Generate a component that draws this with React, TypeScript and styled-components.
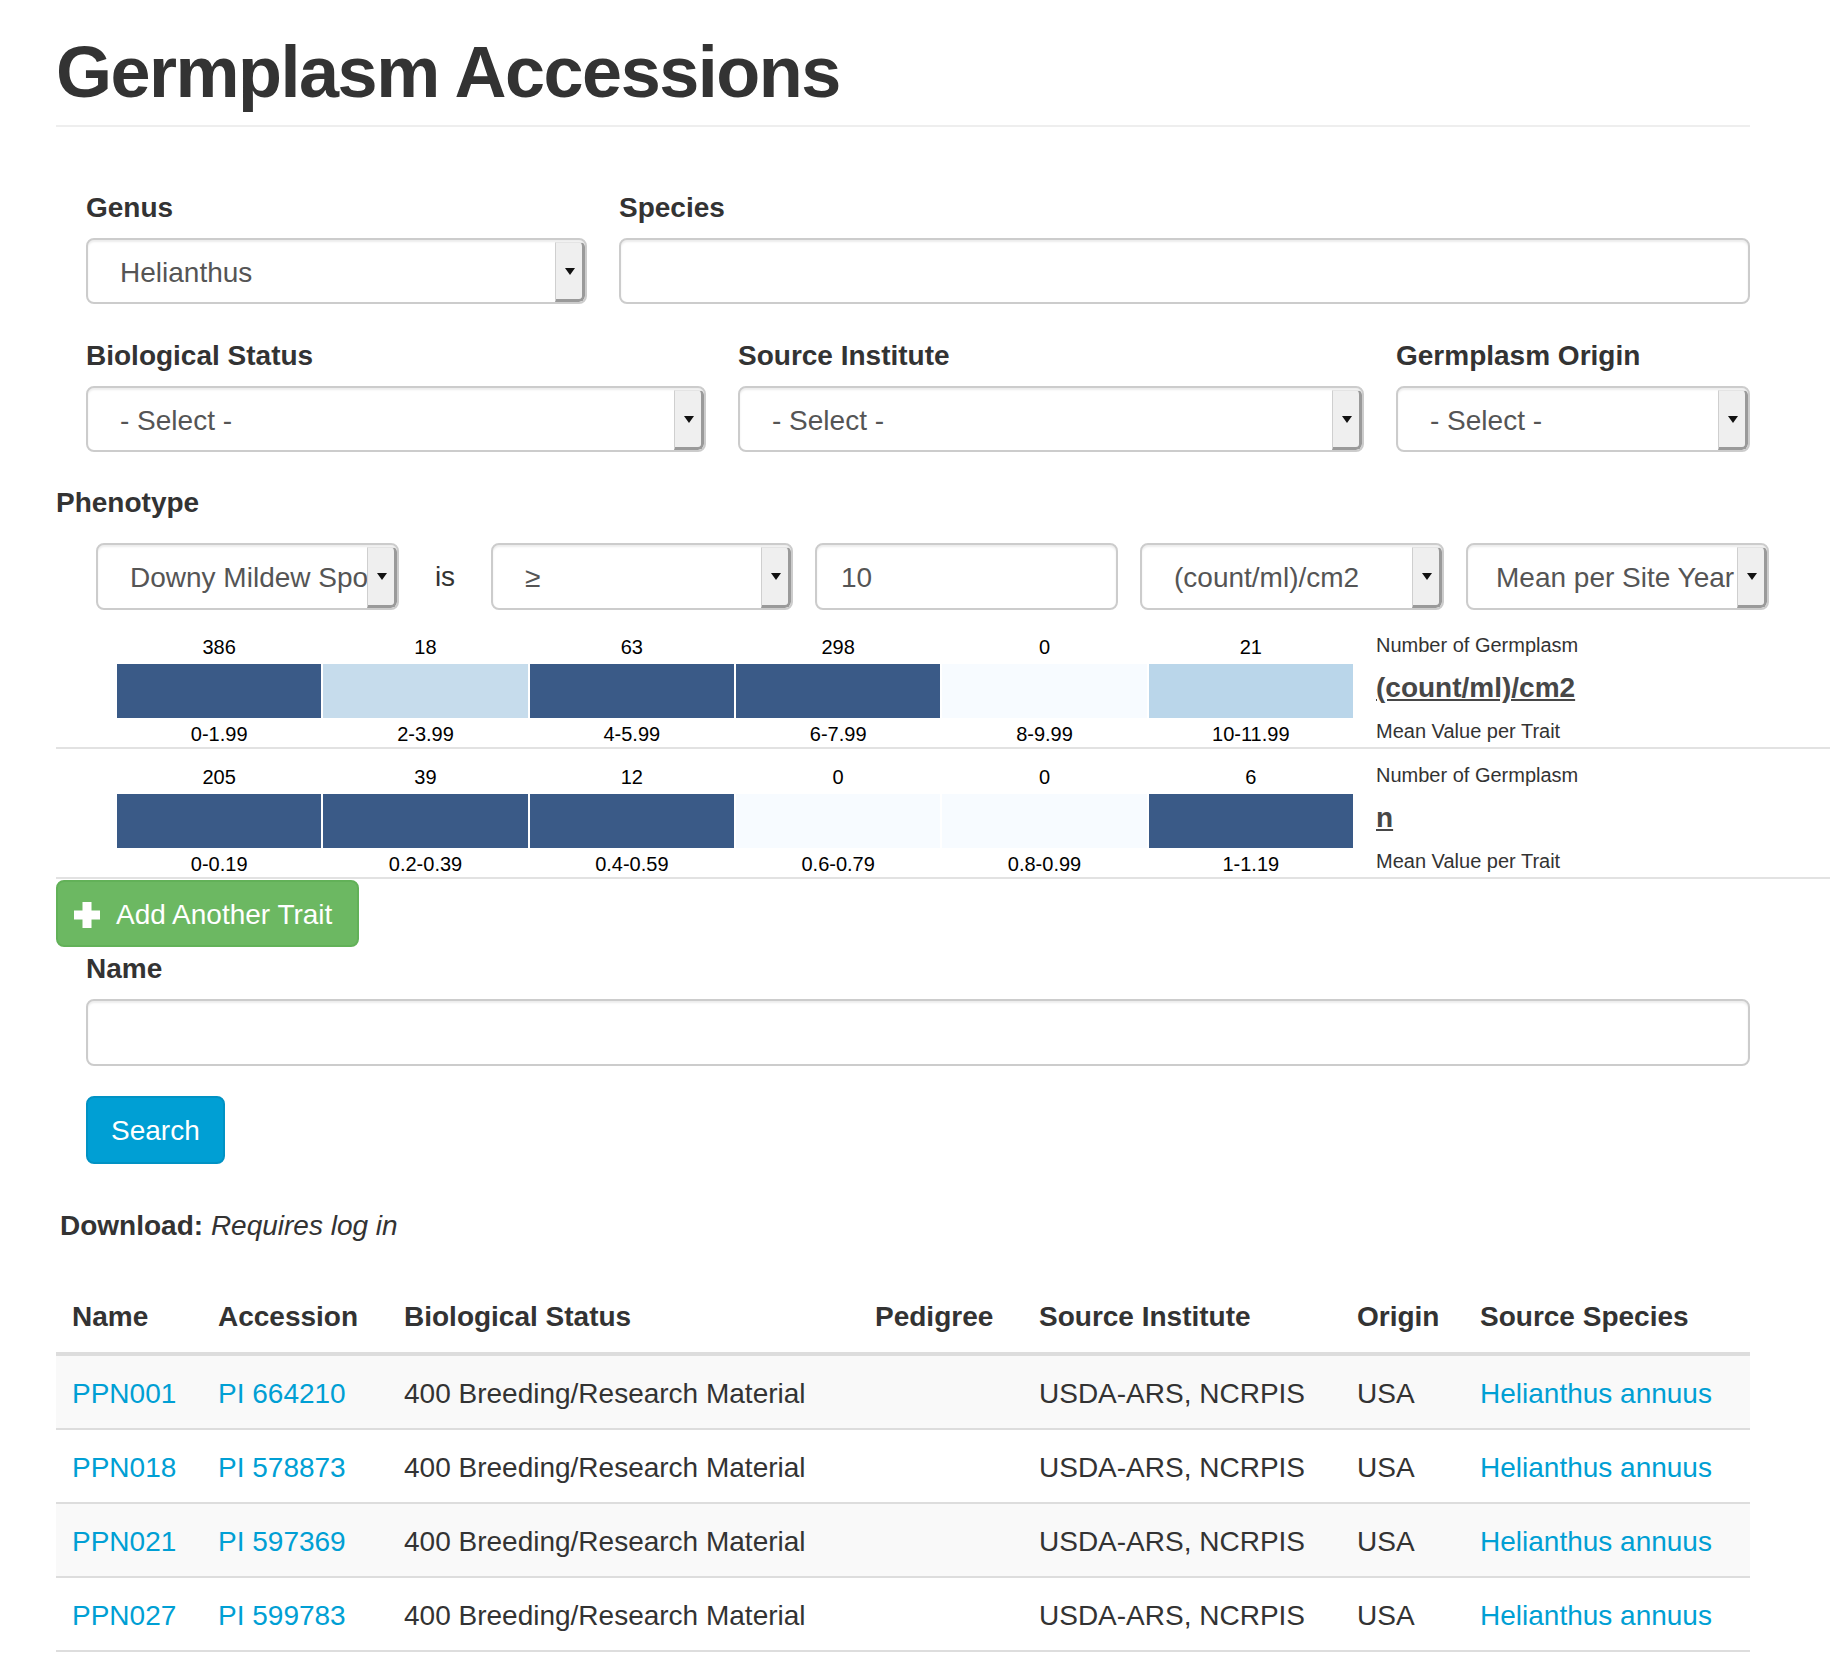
import React from 'react';
import styled, { createGlobalStyle } from 'styled-components';

const GlobalStyle = createGlobalStyle`
  html, body { margin: 0; padding: 0; background: #fff; }
  body {
    font-family: "Liberation Sans", Arial, Helvetica, sans-serif;
    color: #333;
    font-size: 28px;
    line-height: 40px;
    overflow-x: hidden;
  }
  * { box-sizing: border-box; }
`;

const Page = styled.div`
  width: 1750px;
  padding-left: 56px;
`;

const Title = styled.h1`
  margin: 32px 0 0;
  padding-bottom: 13px;
  border-bottom: 2px solid #eee;
  font-size: 72px;
  line-height: 80px;
  font-weight: 700;
  letter-spacing: -1.5px;
  color: #333;
`;

const Fields = styled.div`
  margin-top: 61px;
  padding-left: 30px;
  display: flex;
  flex-direction: column;
  gap: 32px;
`;

const Row = styled.div`
  display: flex;
  gap: 32px;
`;

const Field = styled.div<{ $w: number }>`
  width: ${(p) => p.$w}px;
  display: flex;
  flex-direction: column;
`;

const Label = styled.label<{ $top?: number }>`
  display: block;
  margin-top: ${(p) => p.$top ?? 0}px;
  margin-bottom: 10px;
  font-size: 28px;
  line-height: 40px;
  font-weight: 700;
  color: #333;
`;

const SelectBox = styled.div<{ $w?: number; $h?: number }>`
  display: flex;
  align-items: stretch;
  width: ${(p) => (p.$w ? `${p.$w}px` : '100%')};
  flex: 0 0 auto;
  height: ${(p) => p.$h ?? 66}px;
  border: 2px solid #ccc;
  border-radius: 8px;
  background: #fff;
  box-shadow: inset 0 2px 2px rgba(0, 0, 0, 0.075);
  overflow: hidden;
`;

const SelectValue = styled.div<{ $pad?: number }>`
  flex: 1;
  min-width: 0;
  padding-left: ${(p) => p.$pad ?? 32}px;
  padding-top: 3px;
  display: flex;
  align-items: center;
  white-space: nowrap;
  overflow: hidden;
  font-size: 28px;
  line-height: 40px;
  color: #555;
`;

const ArrowButton = styled.div`
  flex: 0 0 30px;
  margin-top: 2px;
  background: #efefef;
  border-top: 1px solid #e4e4e4;
  border-left: 1px solid #cfcfcf;
  border-right: 3px solid #9a9a9a;
  border-bottom: 3px solid #9a9a9a;
  border-radius: 0 5px 6px 0;
  display: flex;
  align-items: center;
  justify-content: center;
`;

const Caret = styled.span`
  width: 0;
  height: 0;
  margin-left: 1px;
  border-left: 5px solid transparent;
  border-right: 5px solid transparent;
  border-top: 7px solid #111;
`;

const TextInput = styled.input<{ $w?: number; $h?: number }>`
  display: block;
  width: ${(p) => (p.$w ? `${p.$w}px` : '100%')};
  flex: 0 0 auto;
  height: ${(p) => p.$h ?? 66}px;
  margin: 0;
  padding: 3px 24px 0;
  border: 2px solid #ccc;
  border-radius: 8px;
  background: #fff;
  box-shadow: inset 0 2px 2px rgba(0, 0, 0, 0.075);
  font-family: "Liberation Sans", Arial, Helvetica, sans-serif;
  font-size: 28px;
  color: #555;
  outline: none;
`;

const SectionLabel = styled.div`
  margin-top: 31px;
  margin-bottom: 20px;
  font-size: 28px;
  line-height: 40px;
  font-weight: 700;
  color: #333;
`;

const PhenoRow = styled.div`
  display: flex;
  align-items: center;
  gap: 22px;
  padding-left: 40px;
  height: 67px;
`;

const IsText = styled.span`
  flex: 0 0 48px;
  text-align: center;
  font-size: 28px;
  line-height: 40px;
  color: #333;
`;

const Charts = styled.div`
  margin-top: 9px;
`;

const TraitChart = styled.div`
  width: 1774px;
  height: 130px;
  border-bottom: 2px solid #e2e2e2;
  display: flex;
`;

const Bins = styled.div`
  margin-left: 61px;
  width: 1236px;
  display: grid;
  grid-template-columns: repeat(6, 1fr);
  column-gap: 2px;
  align-content: start;
`;

const Bin = styled.div`
  display: flex;
  flex-direction: column;
  align-items: center;
`;

const BinCount = styled.div`
  margin-top: 16px;
  font-size: 20px;
  line-height: 24px;
  color: #000;
`;

const BinBar = styled.div<{ $c: string }>`
  margin-top: 5px;
  width: 100%;
  height: 54px;
  background: ${(p) => p.$c};
`;

const BinRange = styled.div`
  margin-top: 4px;
  font-size: 20px;
  line-height: 24px;
  color: #000;
`;

const Legend = styled.div`
  margin-left: 23px;
  padding-top: 14px;
  display: flex;
  flex-direction: column;
  align-items: flex-start;
`;

const LegendNote = styled.div`
  font-size: 20px;
  line-height: 24px;
  color: #333;
`;

const LegendUnit = styled.a`
  margin: 11px 0;
  font-size: 28px;
  line-height: 40px;
  font-weight: 700;
  color: #474747;
  text-decoration: underline;
`;

const AddButton = styled.button`
  display: flex;
  align-items: center;
  width: fit-content;
  gap: 16px;
  margin-top: 1px;
  height: 67px;
  padding: 2px 25px 0 16px;
  background: #6cb862;
  border: 2px solid #62b158;
  border-radius: 8px;
  color: #fff;
  font-family: "Liberation Sans", Arial, Helvetica, sans-serif;
  font-size: 28px;
  line-height: 40px;
`;

const NameSection = styled.div`
  padding-left: 30px;
`;

const SearchButton = styled.button`
  display: block;
  margin-top: 30px;
  height: 68px;
  padding: 2px 23px 0;
  background: #009fd4;
  border: 2px solid #0092c4;
  border-radius: 8px;
  color: #fff;
  font-family: "Liberation Sans", Arial, Helvetica, sans-serif;
  font-size: 28px;
  line-height: 40px;
`;

const Download = styled.div`
  margin: 42px 0 0 4px;
  font-size: 28px;
  line-height: 40px;
  color: #333;
  strong { font-weight: 700; }
  em { font-style: italic; }
`;

const Table = styled.table`
  margin-top: 34px;
  width: 1694px;
  table-layout: fixed;
  border-collapse: separate;
  border-spacing: 0;
  font-size: 28px;
  line-height: 40px;
`;

const Th = styled.th`
  padding: 17px 16px 15px;
  text-align: left;
  font-weight: 700;
  color: #333;
  border-bottom: 4px solid #ddd;
  white-space: nowrap;
`;

const Tr = styled.tr<{ $striped: boolean }>`
  background: ${(p) => (p.$striped ? '#f9f9f9' : '#fff')};
  &:not(:first-child) td { border-top: 2px solid #ddd; }
  &:last-child td { border-bottom: 2px solid #ddd; }
`;

const Td = styled.td`
  padding: 18px 16px 14px;
  color: #333;
  white-space: nowrap;
`;

const Link = styled.a`
  color: #009fd4;
  text-decoration: none;
`;

const PlusIcon = () => (
  <svg width="26" height="26" viewBox="0 0 26 26" aria-hidden="true">
    <rect x="8.5" y="0" width="9" height="26" fill="#fff" />
    <rect x="0" y="8.5" width="26" height="9" fill="#fff" />
  </svg>
);

type SelectProps = { value: string; w?: number; h?: number; pad?: number };
const Select = ({ value, w, h, pad }: SelectProps) => (
  <SelectBox $w={w} $h={h}>
    <SelectValue $pad={pad}>{value}</SelectValue>
    <ArrowButton>
      <Caret />
    </ArrowButton>
  </SelectBox>
);

const DARK = '#3a5a87';
const PALE = '#f7fbff';

const traits = [
  {
    unit: '(count/ml)/cm2',
    bins: [
      { n: 386, r: '0-1.99', c: DARK },
      { n: 18, r: '2-3.99', c: '#c6dcec' },
      { n: 63, r: '4-5.99', c: DARK },
      { n: 298, r: '6-7.99', c: DARK },
      { n: 0, r: '8-9.99', c: PALE },
      { n: 21, r: '10-11.99', c: '#bad6ea' },
    ],
  },
  {
    unit: 'n',
    bins: [
      { n: 205, r: '0-0.19', c: DARK },
      { n: 39, r: '0.2-0.39', c: DARK },
      { n: 12, r: '0.4-0.59', c: DARK },
      { n: 0, r: '0.6-0.79', c: PALE },
      { n: 0, r: '0.8-0.99', c: PALE },
      { n: 6, r: '1-1.19', c: DARK },
    ],
  },
];

const rows = [
  { name: 'PPN001', acc: 'PI 664210' },
  { name: 'PPN018', acc: 'PI 578873' },
  { name: 'PPN021', acc: 'PI 597369' },
  { name: 'PPN027', acc: 'PI 599783' },
];

const colWidths = [146, 186, 471, 164, 318, 123, 286];
const headers = ['Name', 'Accession', 'Biological Status', 'Pedigree', 'Source Institute', 'Origin', 'Source Species'];

export default function App() {
  return (
    <>
      <GlobalStyle />
      <Page>
        <Title>Germplasm Accessions</Title>

        <Fields>
          <Row>
            <Field $w={501}>
              <Label>Genus</Label>
              <Select value="Helianthus" />
            </Field>
            <Field $w={1131}>
              <Label>Species</Label>
              <TextInput readOnly defaultValue="" />
            </Field>
          </Row>
          <Row>
            <Field $w={620}>
              <Label>Biological Status</Label>
              <Select value="- Select -" />
            </Field>
            <Field $w={626}>
              <Label>Source Institute</Label>
              <Select value="- Select -" />
            </Field>
            <Field $w={354}>
              <Label>Germplasm Origin</Label>
              <Select value="- Select -" />
            </Field>
          </Row>
        </Fields>

        <SectionLabel>Phenotype</SectionLabel>
        <PhenoRow>
          <Select value="Downy Mildew Spo" w={303} h={67} />
          <IsText>is</IsText>
          <Select value="≥" w={302} h={67} />
          <TextInput readOnly defaultValue="10" $w={303} $h={67} />
          <Select value="(count/ml)/cm2" w={304} h={67} />
          <Select value="Mean per Site Year" w={303} h={67} pad={28} />
        </PhenoRow>

        <Charts>
          {traits.map((t) => (
            <TraitChart key={t.unit}>
              <Bins>
                {t.bins.map((b) => (
                  <Bin key={b.r}>
                    <BinCount>{b.n}</BinCount>
                    <BinBar $c={b.c} />
                    <BinRange>{b.r}</BinRange>
                  </Bin>
                ))}
              </Bins>
              <Legend>
                <LegendNote>Number of Germplasm</LegendNote>
                <LegendUnit>{t.unit}</LegendUnit>
                <LegendNote>Mean Value per Trait</LegendNote>
              </Legend>
            </TraitChart>
          ))}
        </Charts>

        <AddButton type="button">
          <PlusIcon />
          <span>Add Another Trait</span>
        </AddButton>

        <NameSection>
          <Label $top={2}>Name</Label>
          <TextInput readOnly defaultValue="" $h={67} />
          <SearchButton type="button">Search</SearchButton>
        </NameSection>

        <Download>
          <strong>Download:</strong> <em>Requires log in</em>
        </Download>

        <Table>
          <colgroup>
            {colWidths.map((w, i) => (
              <col key={i} style={{ width: w }} />
            ))}
          </colgroup>
          <thead>
            <tr>
              {headers.map((h) => (
                <Th key={h}>{h}</Th>
              ))}
            </tr>
          </thead>
          <tbody>
            {rows.map((r, i) => (
              <Tr key={r.name} $striped={i % 2 === 0}>
                <Td>
                  <Link>{r.name}</Link>
                </Td>
                <Td>
                  <Link>{r.acc}</Link>
                </Td>
                <Td>400 Breeding/Research Material</Td>
                <Td></Td>
                <Td>USDA-ARS, NCRPIS</Td>
                <Td>USA</Td>
                <Td>
                  <Link>Helianthus annuus</Link>
                </Td>
              </Tr>
            ))}
          </tbody>
        </Table>
      </Page>
    </>
  );
}
